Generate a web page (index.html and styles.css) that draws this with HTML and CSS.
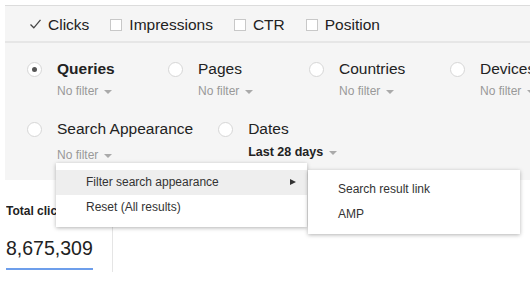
FILE: index.html
```html
<!DOCTYPE html>
<html lang="en">
<head>
    <meta charset="UTF-8">
    <title>Search Analytics</title>
    <link rel="stylesheet" href="styles.css">
</head>
<body>
    <div class="panel">
        <div class="metrics">
            <label class="metric">
                <svg class="check" width="11" height="10" viewBox="0 0 11 10"><path d="M0.5 5.5 L3.8 8.8 L10.5 0.8" fill="none" stroke="#444" stroke-width="1.3"/></svg>
                Clicks
            </label>
            <label class="metric"><span class="box"></span>Impressions</label>
            <label class="metric"><span class="box"></span>CTR</label>
            <label class="metric"><span class="box"></span>Position</label>
        </div>

        <div class="dims">
            <div class="dim-row">
                <div class="dim">
                    <span class="radio on"></span>
                    <div>
                        <div class="dim-name bold">Queries</div>
                        <div class="dim-filter">No filter <span class="caret"></span></div>
                    </div>
                </div>
                <div class="dim">
                    <span class="radio"></span>
                    <div>
                        <div class="dim-name">Pages</div>
                        <div class="dim-filter">No filter <span class="caret"></span></div>
                    </div>
                </div>
                <div class="dim">
                    <span class="radio"></span>
                    <div>
                        <div class="dim-name">Countries</div>
                        <div class="dim-filter">No filter <span class="caret"></span></div>
                    </div>
                </div>
                <div class="dim">
                    <span class="radio"></span>
                    <div>
                        <div class="dim-name">Devices</div>
                        <div class="dim-filter">No filter <span class="caret"></span></div>
                    </div>
                </div>
            </div>
            <div class="dim-row second">
                <div class="dim">
                    <span class="radio"></span>
                    <div>
                        <div class="dim-name">Search Appearance</div>
                        <div class="dim-filter">No filter <span class="caret"></span></div>
                    </div>
                </div>
                <div class="dim">
                    <span class="radio"></span>
                    <div>
                        <div class="dim-name">Dates</div>
                        <div class="dim-filter dates">Last 28 days <span class="caret"></span></div>
                    </div>
                </div>
            </div>
        </div>
    </div>

    <div class="summary">
        <div class="total">
            <div class="total-label">Total clicks</div>
            <div class="total-value">8,675,309</div>
        </div>
    </div>

    <!-- dropdown opened from "No filter" under Search Appearance -->
    <div class="menu">
        <div class="menu-item active">Filter search appearance <span class="arrow"></span></div>
        <div class="menu-item">Reset (All results)</div>
    </div>
    <div class="menu sub">
        <div class="menu-item">Search result link</div>
        <div class="menu-item">AMP</div>
    </div>
</body>
</html>
```

FILE: styles.css
```css
body {
    font-family: "Liberation Sans", Arial, sans-serif;
    margin: 0;
    padding: 0;
    background-color: #fff;
    color: #222;
    width: 530px;
    height: 284px;
    overflow: hidden;
    position: relative;
}

.panel {
    margin: 5px 0 0 5px;
    border-top: 1px solid #dcdcdc;
    background-color: #f5f5f5;
}

.metrics {
    display: flex;
    align-items: center;
    gap: 21px;
    height: 37px;
    padding: 2px 0 0 25px;
    box-sizing: border-box;
    border-bottom: 2px solid #e6e6e6;
    font-size: 15.5px;
}

.metric {
    display: flex;
    align-items: center;
    gap: 7px;
}

.check {
    margin-top: -2px;
}

.box {
    width: 10px;
    height: 10px;
    border: 1px solid #c8c8c8;
    background-color: #fff;
}

.dims {
    padding: 16px 0 18px 22px;
}

.dim-row {
    display: grid;
    grid-template-columns: repeat(4, 141px);
}

.dim-row.second {
    display: flex;
    gap: 25px;
    margin-top: 21px;
}

.dim {
    display: flex;
    gap: 15px;
}

.radio {
    width: 13px;
    height: 13px;
    margin-top: 3px;
    border: 1px solid #d6d6d6;
    border-radius: 50%;
    background-color: #fff;
    position: relative;
    flex-shrink: 0;
}

.radio.on::after {
    content: "";
    position: absolute;
    left: 4px;
    top: 4px;
    width: 5px;
    height: 5px;
    border-radius: 50%;
    background-color: #555;
}

.dim-name {
    font-size: 15.5px;
    line-height: 20px;
    white-space: nowrap;
}

.bold {
    font-weight: bold;
}

.dim-filter {
    margin-top: 5px;
    font-size: 12px;
    color: #999;
    white-space: nowrap;
}

.second .dim-filter {
    margin-top: 9px;
}

.second .dim-filter.dates {
    color: #222;
    font-weight: bold;
    font-size: 12.5px;
    margin-top: 6px;
}

.caret {
    display: inline-block;
    margin-left: 2px;
    vertical-align: middle;
    border-left: 4px solid transparent;
    border-right: 4px solid transparent;
    border-top: 4px solid #aaa;
}

.summary {
    display: flex;
    height: 92px;
}

.total {
    width: 113px;
    padding: 24px 0 0 6px;
    border-right: 1px solid #e5e5e5;
    box-sizing: border-box;
}

.total-label {
    font-size: 12px;
    font-weight: bold;
    white-space: nowrap;
    overflow: hidden;
}

.total-value {
    display: inline-block;
    margin-top: 19px;
    padding-bottom: 8px;
    font-size: 19.5px;
    border-bottom: 2px solid #6d9eeb;
}

.menu {
    position: absolute;
    left: 56px;
    top: 163px;
    width: 251px;
    padding: 7px 0;
    background-color: #fff;
    box-shadow: 0 1px 4px rgba(0, 0, 0, 0.3);
    font-size: 12px;
    color: #333;
}

.menu.sub {
    left: 308px;
    top: 170px;
    width: 212px;
}

.menu-item {
    position: relative;
    height: 25px;
    line-height: 25px;
    padding-left: 30px;
}

.menu-item.active {
    background-color: #eee;
}

.arrow {
    position: absolute;
    right: 11px;
    top: 9px;
    border-top: 3px solid transparent;
    border-bottom: 3px solid transparent;
    border-left: 6px solid #333;
}
```
